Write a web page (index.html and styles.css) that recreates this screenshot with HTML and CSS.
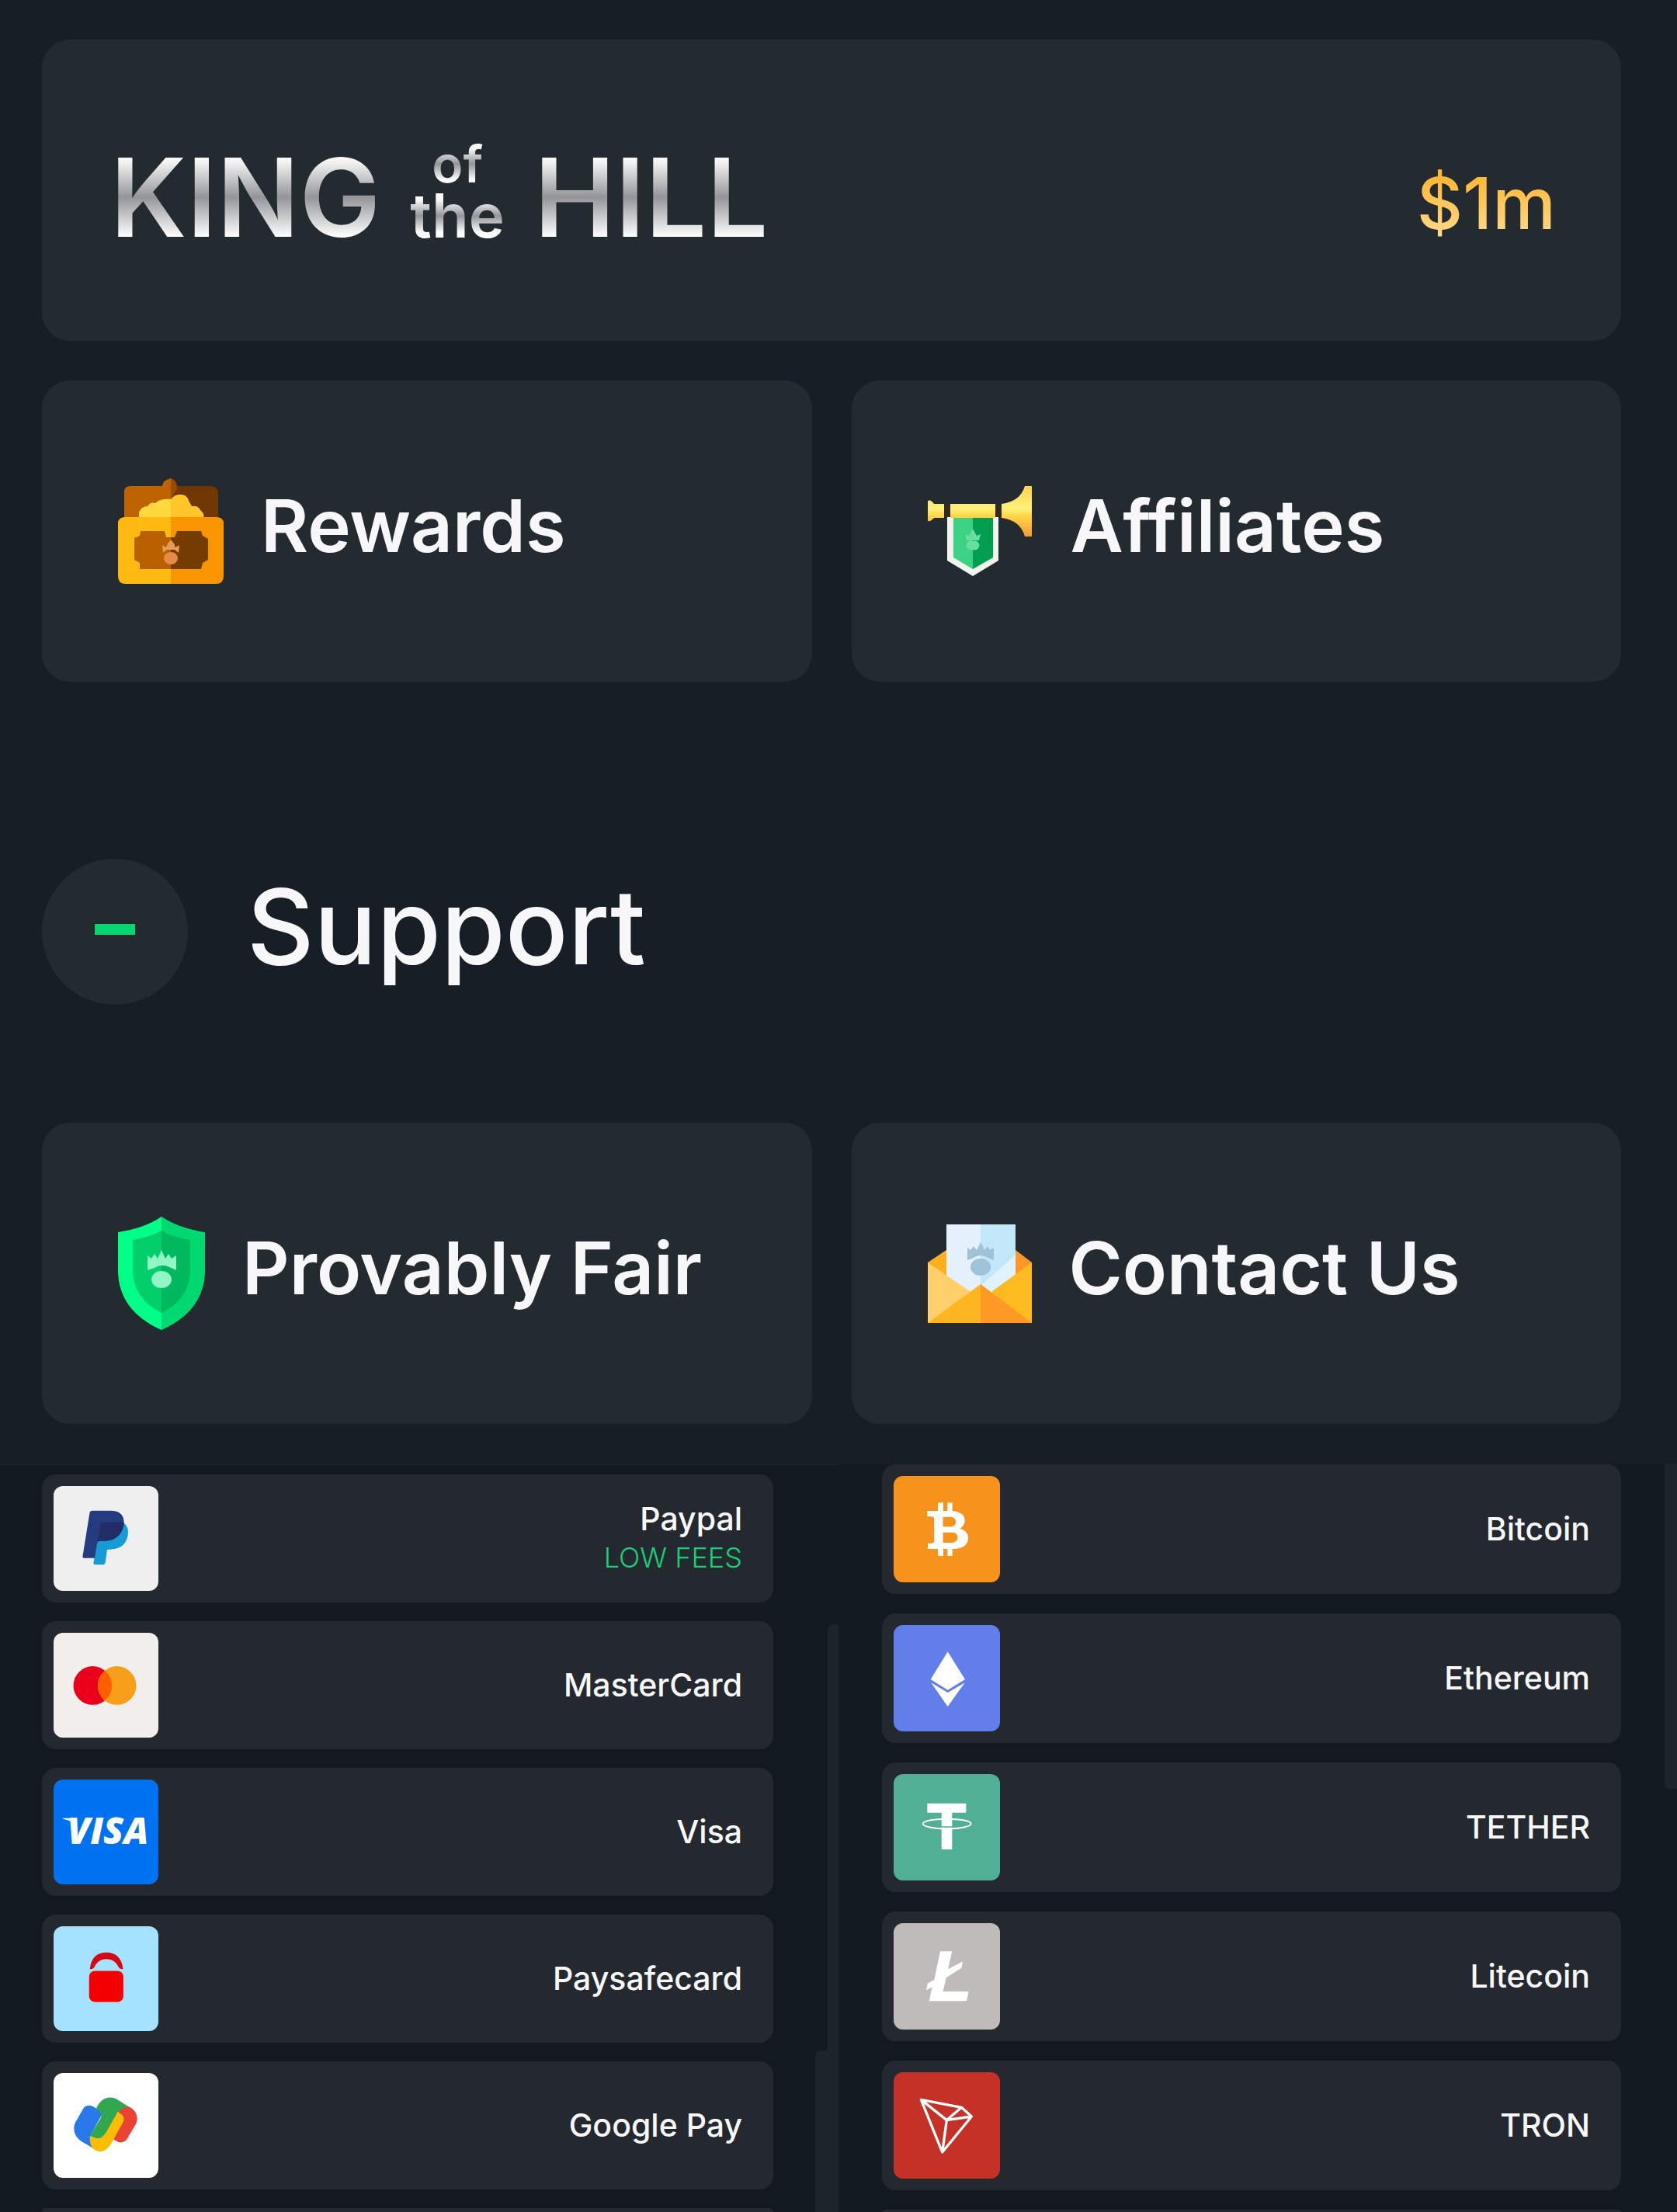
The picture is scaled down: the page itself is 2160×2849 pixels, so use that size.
FILE: index.html
```html
<!DOCTYPE html>
<html lang="en">
<head>
<meta charset="utf-8">
<meta name="viewport" content="width=device-width, initial-scale=1">
<title>Rewards, Support and Payments</title>
<link rel="stylesheet" href="styles.css">
</head>
<body>
<main class="page">
  <nav class="menu" aria-label="Main menu">
    <a class="card card-wide" href="#king">
      <span class="logo">
        <span class="logo-word">KING</span>
        <span class="logo-small"><span class="logo-of">of</span><span class="logo-the">the</span></span>
        <span class="logo-word">HILL</span>
      </span>
      <span class="prize">$1m</span>
    </a>
    <div class="card-row">
      <a class="card" href="#rewards">
        <svg class="card-icon" width="136" height="136" viewBox="0 0 136 136" aria-hidden="true">
          <path fill="#bd6400" d="M68 0V56H8V18Q8 10 16 10H57Q58 2 68 0Z"/>
          <path fill="#703800" d="M68 0Q75 2 77 10H118Q129 10 129 20V56H68Z"/>
          <path fill="#9a4d00" d="M68 0Q75 2 76 14L68 26Z"/>
          <path fill="#ffd83d" d="M27 54V44Q30 36 38 36Q42 30 48 32Q54 26 68 27V54Z"/>
          <path fill="#ffc52b" d="M68 27Q73 20 81 21Q89 21 91 29L95 36Q104 35 106 41Q112 45 110 54H68Z"/>
          <path fill="#ffb911" d="M10 50H68V136H10Q0 136 0 126V58Q0 50 10 50Z"/>
          <path fill="#f89500" d="M68 50H126Q136 50 136 58V126Q136 136 126 136H68Z"/>
          <path fill="#b96100" d="M29 68H60L62 76H68V117H28V109L21 105V77L28 74Z"/>
          <path fill="#753c00" d="M68 76H73L76 68H107L109 74L116 78V105L109 109L107 117H68Z"/>
          <path fill="#ea9a58" d="M57 86L62 89L64 84L68 79L72 84L74 89L79 86L78 96L73 92H63L58 96Z"/>
          <ellipse cx="68" cy="103" rx="9" ry="8" fill="#e58b45"/>
        </svg>
        <span class="card-label">Rewards</span>
      </a>
      <a class="card" href="#affiliates">
        <svg class="card-icon" width="136" height="116" viewBox="0 0 136 116" aria-hidden="true">
          <defs>
            <linearGradient id="brass" x1="0" y1="0" x2="0" y2="65" gradientUnits="userSpaceOnUse">
              <stop offset="0" stop-color="#ffd34e"/><stop offset=".45" stop-color="#fff07a"/>
              <stop offset=".6" stop-color="#ffd544"/><stop offset="1" stop-color="#f59a35"/>
            </linearGradient>
          </defs>
          <path fill="#f0f3ee" d="M25 38H91V96L58 116L25 96Z"/>
          <path fill="#3dd184" d="M33 38H58V107L33 92Z"/>
          <path fill="#009f4f" d="M58 38H84V92L58 107Z"/>
          <path fill="#67dfa1" d="M48 62L53 64L58 55L63 64L68 62L66 70H50ZM58 71a6 6 0 1 1 0 11a6 6 0 1 1 0-11Z"/>
          <path fill="#332b20" d="M21 24H29V40H21ZM87 24H95V40H87Z"/>
          <path fill="url(#brass)" d="M0 19Q4 17 8 23H21V41H8Q4 46 0 45ZM29 23H87V41H29ZM95 23Q119 20 125 0H134V65H125Q119 44 95 41Z"/>
        </svg>
        <span class="card-label">Affiliates</span>
      </a>
    </div>
  </nav>

  <section class="support">
    <h2 class="support-title">
      <button class="toggle" type="button" aria-expanded="true" aria-label="Collapse Support"><span class="minus"></span></button>
      <span class="support-text">Support</span>
    </h2>
    <div class="card-row">
      <a class="card" href="#fair">
        <svg class="card-icon" width="112" height="146" viewBox="0 0 112 146" aria-hidden="true">
          <path fill="#00ff86" d="M56 0Q34 15 0 20V72Q2 122 56 146Z"/>
          <path fill="#00d971" d="M56 0Q78 15 112 20V72Q110 122 56 146Z"/>
          <path fill="#00cf6c" d="M56 18Q42 26 19 30V72Q21 107 56 124Z"/>
          <path fill="#00b95f" d="M56 18Q70 26 93 30V72Q91 107 56 124Z"/>
          <path fill="#91f5c5" d="M38 50L43 54L47 48L51 54L56 43L61 54L65 48L69 54L75 50V69L66 65Q56 60 47 66L38 69Z"/>
          <ellipse cx="56" cy="81" rx="13" ry="11" fill="#91f5c5"/>
        </svg>
        <span class="card-label">Provably Fair</span>
      </a>
      <a class="card" href="#contact">
        <svg class="card-icon" width="134" height="128" viewBox="0 0 134 128" aria-hidden="true">
          <path fill="#ffae1c" d="M0 50L24 34H68V128H0Z"/>
          <path fill="#ff9728" d="M134 50L113 34H68V128H134Z"/>
          <path fill="#e4f1fd" d="M24 1H68V100L24 70Z"/>
          <path fill="#c2e7f8" d="M68 1H113V68L68 100Z"/>
          <path fill="#dff2fd" d="M113 40V70L68 100V80Z"/>
          <path fill="#9fc3d6" d="M51 31L55 34L59 29L63 34L68 24L73 34L77 29L80 34L85 31V47L77 44Q68 38 59 44L51 47Z"/>
          <ellipse cx="68" cy="56" rx="13" ry="11" fill="#9fc3d6"/>
          <path fill="#ffd06a" d="M0 50L54 87V110L0 128Z"/>
          <path fill="#ffba20" d="M134 50L83 87V110L134 128Z"/>
          <path fill="#ffb51f" d="M68 78V128H0Z"/>
          <path fill="#ff9926" d="M68 78V128H134Z"/>
        </svg>
        <span class="card-label">Contact Us</span>
      </a>
    </div>
  </section>
</main>

<section class="payments" aria-label="Payment methods">
  <ul class="pane pane-cash">
    <li><button class="method" type="button">
      <svg class="tile" viewBox="206 131 407 407" aria-hidden="true">
        <path fill="#efefef" d="M206 131H613V538H206Z"/>
        <path fill="#179bd7" d="M390 273H478Q501 293 494 325C486 365 458 378 414 378L407 429Q406 436 399 436H368Q360 436 361 428L376 345Z"/>
        <path fill="#253b80" d="M357 227H432C468 227 484 252 478 285C470 325 440 344 405 344H388Q377 344 375 355L366 411H326Q318 411 319 403L346 236Q347 227 357 227Z"/>
        <path fill="#222d65" d="M396 272H478Q479 278 478 285C470 325 440 344 405 344H378L388 279Q389 272 396 272Z"/>
      </svg>
      <span class="method-text">Paypal<small class="note">LOW FEES</small></span>
    </button></li>
    <li><button class="method" type="button">
      <svg class="tile" viewBox="206 699 407 407" aria-hidden="true">
        <path fill="#f1eeec" d="M206 699H613V1106H206Z"/>
        <circle cx="358" cy="904" r="75" fill="#eb001b"/>
        <circle cx="452" cy="904" r="75" fill="#f79e1b"/>
        <path fill="#ff5f00" d="M405 846A75 75 0 0 1 405 962A75 75 0 0 1 405 846Z"/>
      </svg>
      <span class="method-text">MasterCard</span>
    </button></li>
    <li><button class="method" type="button">
      <svg class="tile" viewBox="0 0 136 136" aria-hidden="true">
        <path fill="#0071f0" d="M0 0H136V136H0Z"/>
        <path fill="#fff" d="M12 50H27L31 64Q26 53 12 51Z"/>
        <text class="visa" x="18" y="84">VISA</text>
      </svg>
      <span class="method-text">Visa</span>
    </button></li>
    <li><button class="method" type="button">
      <svg class="tile" viewBox="206 334 407 407" aria-hidden="true">
        <path fill="#a4e2ff" d="M206 334H613V741H206Z"/>
        <path fill="#d40a12" d="M347 500C352 455 375 436 411 436C447 436 470 455 476 500Q463 502 457 490C448 470 430 461 411 461C392 461 375 470 366 490Q360 502 347 500Z"/>
        <rect x="344" y="507" width="133" height="121" rx="23" fill="#f50000"/>
      </svg>
      <span class="method-text">Paysafecard</span>
    </button></li>
    <li><button class="method" type="button">
      <svg class="tile" viewBox="206 899 407 407" aria-hidden="true">
        <path fill="#fff" d="M206 899H613V1306H206Z"/>
        <path fill="#2979ea" d="M322 1036Q330 1024 346 1025Q352 1025 358 1029L398 1052L350 1140L358 1190L315 1165Q285 1145 285 1113Q285 1100 292 1088Z"/>
        <path fill="#2fa84f" d="M372 1037Q388 996 425 994Q440 994 452 1001L498 1030L458 1050L415 1130L385 1158L347 1143L388 1075Q400 1055 372 1037Z"/>
        <path fill="#ea4335" d="M458 1050Q475 1028 500 1030Q530 1045 531 1078Q530 1090 525 1098L490 1157Q478 1172 458 1167L439 1157L470 1092Z"/>
        <path fill="#fbbc04" d="M455 1050L471 1060Q485 1073 475 1092L430 1172Q412 1204 387 1204Q365 1202 355 1187Q345 1170 347 1143Q387 1168 410 1130Z"/>
      </svg>
      <span class="method-text">Google Pay</span>
    </button></li>
    <li class="peek"></li>
    <li class="rail" aria-hidden="true"></li>
    <li class="thumb" aria-hidden="true"></li>
  </ul>

  <ul class="pane pane-crypto">
    <li><button class="method" type="button">
      <svg class="tile" viewBox="330 95 411 411" aria-hidden="true">
        <path fill="#f7931a" d="M330 95H741V506H330Z"/>
        <path fill="#fff" fill-rule="evenodd" d="M460 230H550C585 230 605 245 605 265C605 283 596 292 586 298C605 303 618 315 618 335C618 362 595 377 560 377H462V355H477Q486 355 486 346V261Q486 252 477 252H460ZM521 253V291H548C562 291 570 284 570 272C570 260 562 253 548 253ZM521 313V353H552C568 353 577 345 577 333C577 321 570 313 555 313Z"/>
        <path fill="#fff" d="M501 198H522V235H501ZM538 198H557V235H538ZM501 372H522V404H501ZM538 372H557V404H538Z"/>
      </svg>
      <span class="method-text">Bitcoin</span>
    </button></li>
    <li><button class="method" type="button">
      <svg class="tile" viewBox="330 670 411 411" aria-hidden="true">
        <path fill="#627eea" d="M330 670H741V1081H330Z"/>
        <path fill="#fff" d="M539 773L606 880L539 921L473 880ZM475 893L539 931L605 893L539 985Z"/>
      </svg>
      <span class="method-text">Ethereum</span>
    </button></li>
    <li><button class="method" type="button">
      <svg class="tile" viewBox="330 1245 411 411" aria-hidden="true">
        <path fill="#50af95" d="M330 1245H741V1656H330Z"/>
        <path fill="#fff" d="M460 1358H610V1394H556V1536H515V1394H460Z"/>
        <path stroke="#50af95" stroke-width="5" d="M505 1449H566"/>
        <ellipse cx="536" cy="1437" rx="93" ry="19" fill="none" stroke="#fff" stroke-width="6"/>
      </svg>
      <span class="method-text">TETHER</span>
    </button></li>
    <li><button class="method" type="button">
      <svg class="tile" viewBox="330 319 411 411" aria-hidden="true">
        <path fill="#bfbbba" d="M330 319H741V730H330Z"/>
        <path fill="#fff" d="M510 428H556L540 497L597 467L592 492L533 530L521 583H620L612 620H467L479 566L456 578L461 552L487 537Z"/>
      </svg>
      <span class="method-text">Litecoin</span>
    </button></li>
    <li><button class="method" type="button">
      <svg class="tile" viewBox="330 893 411 411" aria-hidden="true">
        <path fill="#c53027" d="M330 893H741V1304H330Z"/>
        <path fill="none" stroke="#fff" stroke-width="10" stroke-linejoin="round" d="M436 999L592 1029L631 1064L518 1202ZL535 1078L592 1029M631 1064L535 1078L518 1202"/>
      </svg>
      <span class="method-text">TRON</span>
    </button></li>
    <li class="peek"></li>
    <li class="page-thumb" aria-hidden="true"></li>
  </ul>
</section>
</body>
</html>
```
FILE: styles.css
```css
* {
  box-sizing: border-box;
}

body {
  margin: 0;
  background: #171e25;
  color: #f7f7f9;
  font-family: Inter, "Liberation Sans", sans-serif;
}

a {
  color: inherit;
  text-decoration: none;
}

button {
  border: 0;
  padding: 0;
  color: inherit;
  font: inherit;
}

.page {
  padding: 51px 72px 52px 54px;
}

.menu {
  display: flex;
  flex-direction: column;
  gap: 51px;
}

.card-row {
  display: grid;
  grid-template-columns: 1fr 1fr;
  gap: 51px;
}

.card {
  display: flex;
  align-items: center;
  gap: 48px;
  min-height: 388px;
  padding: 0 98px;
  border-radius: 36px;
  background: #232a30;
}

.card-wide {
  justify-content: space-between;
  padding: 18px 84px 0 88px;
}

.card-icon {
  flex: none;
}

.card-label {
  padding-bottom: 14px;
  font-size: 94px;
  font-weight: 600;
  line-height: 112px;
  white-space: nowrap;
}

.logo {
  display: flex;
  align-items: flex-end;
  gap: 38px;
}

.logo-word,
.logo-of,
.logo-the {
  background: linear-gradient(#ffffff 15%, #f2f2f2 22%, #939599 50%, #ffffff 82%);
  background-clip: text;
  -webkit-background-clip: text;
  color: transparent;
  font-weight: 600;
}

.logo-word {
  font-size: 140px;
  line-height: 160px;
}

.logo-small {
  display: flex;
  flex-direction: column;
  align-items: center;
  padding-bottom: 22px;
}

.logo-of {
  font-size: 66px;
  line-height: 66px;
}

.logo-the {
  font-size: 78px;
  line-height: 68px;
}

.prize {
  padding-top: 16px;
  background: linear-gradient(#ffb52e 25%, #ffd98c 90%);
  background-clip: text;
  -webkit-background-clip: text;
  color: transparent;
  font-size: 92px;
  font-weight: 500;
  line-height: 112px;
}

.support {
  padding-top: 228px;
}

.support-title {
  display: flex;
  align-items: center;
  gap: 76px;
  margin: 0 0 152px;
}

.toggle {
  display: grid;
  place-items: center;
  width: 188px;
  height: 188px;
  border-radius: 50%;
  background: #232a30;
}

.minus {
  width: 52px;
  height: 14px;
  margin-bottom: 6px;
  background: #06d672;
}

.support-text {
  padding-bottom: 14px;
  font-size: 134px;
  font-weight: 500;
  line-height: 160px;
}

.payments {
  display: grid;
  grid-template-columns: 1fr 1fr;
  border-bottom: 1px solid #05080b;
  background: #12191f;
}

.pane {
  position: relative;
  display: flex;
  flex-direction: column;
  margin: 0;
  list-style: none;
}

.pane-cash {
  gap: 24px;
  padding: 12px 84px 0 54px;
  border-top: 1px solid #1f262d;
}

.pane-crypto {
  gap: 25px;
  padding: 0 72px 0 56px;
}

.method {
  display: flex;
  align-items: center;
  justify-content: space-between;
  width: 100%;
  padding: 15px 40px 15px 15px;
  border-radius: 18px;
  background: #23292f;
}

.tile {
  display: block;
  width: 135px;
  height: 135px;
  border-radius: 12px;
}

.pane-crypto .tile {
  width: 137px;
  height: 137px;
}

.visa {
  fill: #ffffff;
  font-family: "Open Sans", sans-serif;
  font-size: 48px;
  font-style: italic;
  font-weight: 800;
}

.method-text {
  padding-bottom: 2px;
  font-size: 41px;
  font-weight: 500;
  line-height: 50px;
  text-align: right;
}

.note {
  display: block;
  color: #16cf78;
  font-size: 36px;
  font-weight: 300;
}

.peek {
  flex: 1;
  min-height: 3px;
  border-radius: 18px 18px 0 0;
  background: #23292f;
}

/* Scroll bars float over the lists' gutters. */
.rail,
.thumb,
.page-thumb {
  position: absolute;
  right: 0;
  background: #1d242a;
}

.rail {
  top: 205px;
  bottom: 0;
  width: 14px;
  border-radius: 6px 0 0 0;
}

.thumb {
  top: 754px;
  bottom: 0;
  width: 30px;
  border-radius: 6px 0 0 0;
}

.page-thumb {
  top: 0;
  width: 16px;
  height: 418px;
  border-radius: 0 0 0 6px;
}
```
